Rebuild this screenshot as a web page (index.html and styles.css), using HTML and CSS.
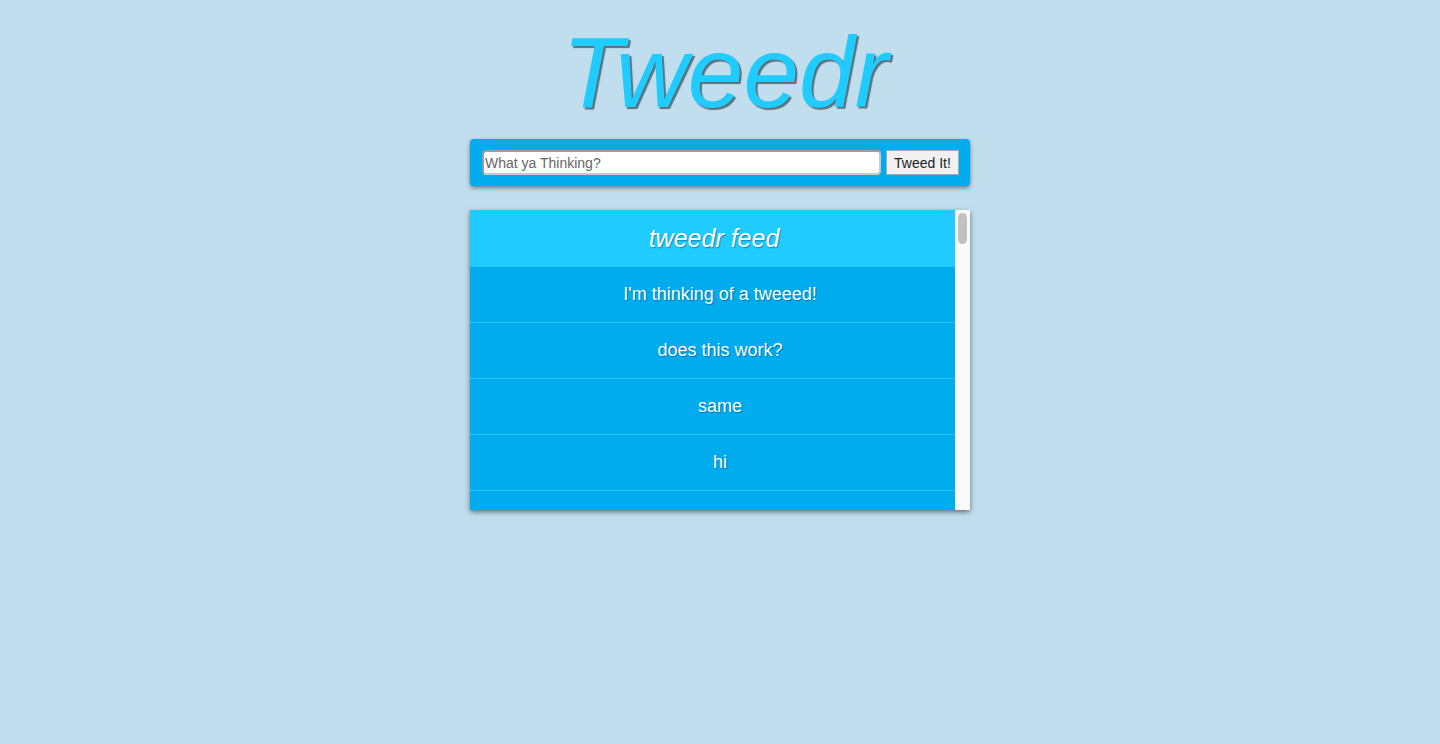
FILE: index.html
```html
<!DOCTYPE html>
<html>
<head>
<meta charset="utf-8">
<link rel="stylesheet" href="styles.css">
</head>
<body>
<div class="page">
  <h1 class="logo">Tweedr</h1>
  <form class="composer">
    <input class="composer-input" type="text" placeholder="What ya Thinking?">
    <button class="composer-btn" type="button">Tweed It!</button>
  </form>
  <div class="feed">
    <div class="feed-body">
      <div class="feed-head">tweedr feed</div>
      <ul class="feed-list">
        <li class="tweed">I'm thinking of a tweeed!</li>
        <li class="tweed">does this work?</li>
        <li class="tweed">same</li>
        <li class="tweed">hi</li>
        <li class="tweed"></li>
      </ul>
    </div>
    <div class="scrollbar"><div class="scroll-thumb"></div></div>
  </div>
</div>
</body>
</html>
```
FILE: styles.css
```css
html, body {
  margin: 0;
  padding: 0;
  background: #c0deee;
  font-family: "Liberation Sans", Arial, sans-serif;
  height: 100%;
}
.page {
  display: flex;
  flex-direction: column;
  align-items: center;
  padding-top: 14px;
}
.logo {
  margin: 0 0 0 10px;
  font-size: 100px;
  line-height: 116px;
  font-weight: normal;
  font-style: italic;
  color: #1fcbff;
  text-shadow: 2px 2px 1px #5a6f78;
}
.composer {
  margin-top: 9px;
  width: 500px;
  box-sizing: border-box;
  background: #00acee;
  border-radius: 4px;
  padding: 11px 11px 11px 12px;
  display: flex;
  gap: 5px;
  box-shadow: 0 2px 4px rgba(0,0,0,0.45);
}
.composer-input {
  flex: 1;
  height: 25px;
  box-sizing: border-box;
  border: 2px solid #9c9c9c;
  border-color: #9c9c9c #c8c8c8 #c8c8c8 #9c9c9c;
  border-radius: 4px;
  padding: 0 1px;
  font-family: "Liberation Sans", Arial, sans-serif;
  font-size: 14px;
  background: #fff;
}
.composer-input::placeholder { color: #666; }
.composer-btn {
  width: 73px;
  height: 25px;
  box-sizing: border-box;
  border: 1px solid #a8a8a8;
  background: #f1f1f1;
  border-radius: 0;
  font-family: "Liberation Sans", Arial, sans-serif;
  font-size: 14px;
  color: #222;
  padding: 0;
}
.feed {
  margin-top: 24px;
  width: 500px;
  height: 300px;
  display: flex;
  box-shadow: 0 2px 5px rgba(0,0,0,0.5);
  background: #00acee;
}
.feed-body {
  flex: 1;
  overflow: hidden;
}
.scrollbar {
  width: 14px;
  background: #fafafa;
  border-left: 1px solid #ececec;
  padding: 3px 3px 0 2px;
  box-sizing: border-box;
  width: 15px;
}
.scroll-thumb {
  height: 31px;
  background: #c1c1c1;
  border-radius: 5px;
}
.feed-head {
  height: 57px;
  background: #1fcbff;
  color: #fff;
  font-style: italic;
  font-size: 25px;
  display: flex;
  align-items: center;
  justify-content: center;
  padding-left: 3px;
  text-shadow: 1px 1px 1px rgba(0,60,100,0.45);
}
.feed-list {
  list-style: none;
  margin: 0;
  padding: 0;
}
.tweed {
  height: 55px;
  border-bottom: 1px solid #1fcbff;
  display: flex;
  align-items: center;
  justify-content: center;
  padding-left: 15px;
  color: #fff;
  font-size: 18px;
  text-shadow: 1px 1px 1px rgba(0,60,100,0.5);
}
```
